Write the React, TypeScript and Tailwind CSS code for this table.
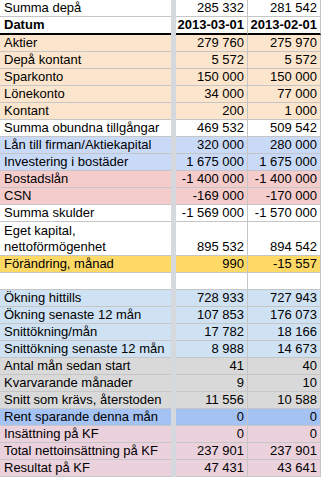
import React from "react";

type Row = {
  a: string;
  b?: string;
  c?: string;
  bg: string;
  bold?: boolean;
  tall?: boolean;
  thick?: boolean;
};

const rows: Row[] = [
  { a: "Summa depå", b: "285 332", c: "281 542", bg: "bg-white" },
  { a: "Datum", b: "2013-03-01", c: "2013-02-01", bg: "bg-white", bold: true, thick: true },
  { a: "Aktier", b: "279 760", c: "275 970", bg: "bg-[#fce5cd]" },
  { a: "Depå kontant", b: "5 572", c: "5 572", bg: "bg-[#fce5cd]" },
  { a: "Sparkonto", b: "150 000", c: "150 000", bg: "bg-[#fce5cd]" },
  { a: "Lönekonto", b: "34 000", c: "77 000", bg: "bg-[#fce5cd]" },
  { a: "Kontant", b: "200", c: "1 000", bg: "bg-[#fce5cd]" },
  { a: "Summa obundna tillgångar", b: "469 532", c: "509 542", bg: "bg-white" },
  { a: "Lån till firman/Aktiekapital", b: "320 000", c: "280 000", bg: "bg-[#c9daf8]" },
  { a: "Investering i bostäder", b: "1 675 000", c: "1 675 000", bg: "bg-[#c9daf8]" },
  { a: "Bostadslån", b: "-1 400 000", c: "-1 400 000", bg: "bg-[#f4cccc]" },
  { a: "CSN", b: "-169 000", c: "-170 000", bg: "bg-[#f4cccc]" },
  { a: "Summa skulder", b: "-1 569 000", c: "-1 570 000", bg: "bg-white" },
  { a: "Eget kapital, nettoförmögenhet", b: "895 532", c: "894 542", bg: "bg-white", tall: true },
  { a: "Förändring, månad", b: "990", c: "-15 557", bg: "bg-[#ffd966]" },
  { a: "", b: "", c: "", bg: "bg-white" },
  { a: "Ökning hittills", b: "728 933", c: "727 943", bg: "bg-[#cfe2f3]" },
  { a: "Ökning senaste 12 mån", b: "107 853", c: "176 073", bg: "bg-[#cfe2f3]" },
  { a: "Snittökning/mån", b: "17 782", c: "18 166", bg: "bg-[#cfe2f3]" },
  { a: "Snittökning senaste 12 mån", b: "8 988", c: "14 673", bg: "bg-[#cfe2f3]" },
  { a: "Antal mån sedan start", b: "41", c: "40", bg: "bg-[#d9d9d9]" },
  { a: "Kvarvarande månader", b: "9", c: "10", bg: "bg-[#d9d9d9]" },
  { a: "Snitt som krävs, återstoden", b: "11 556", c: "10 588", bg: "bg-[#d9d9d9]" },
  { a: "Rent sparande denna mån", b: "0", c: "0", bg: "bg-[#a4c2f4]" },
  { a: "Insättning på KF", b: "0", c: "0", bg: "bg-[#ead1dc]" },
  { a: "Total nettoinsättning på KF", b: "237 901", c: "237 901", bg: "bg-[#ead1dc]" },
  { a: "Resultat på KF", b: "47 431", c: "43 641", bg: "bg-[#ead1dc]" },
];

function SheetRow({ r }: { r: Row }) {
  const h = r.tall ? "h-[34px]" : r.thick ? "h-[18px]" : "h-[17px]";
  const bb = r.thick ? "border-b-2 border-black" : "border-b border-[#c6c6c6]";
  const weight = r.bold ? "font-bold" : "font-normal";
  return (
    <>
      <div
        className={`${h} ${bb} ${r.bg} ${weight} flex items-end overflow-hidden pl-[4px] leading-[16px]`}
      >
        {r.tall ? (
          <div className="whitespace-normal">
            Eget kapital,
            <br />
            nettoförmögenhet
          </div>
        ) : (
          <span className="whitespace-nowrap">{r.a}</span>
        )}
      </div>
      <div className={`${h} bg-[#d5d9de]`} />
      <div
        className={`${h} ${bb} ${r.bg} ${weight} flex items-end justify-end overflow-hidden whitespace-nowrap border-r border-r-[#c6c6c6] pr-[3px] leading-[16px]`}
      >
        {r.b}
      </div>
      <div
        className={`${h} ${bb} ${r.bg} ${weight} flex items-end justify-end overflow-hidden whitespace-nowrap border-r border-r-[#c6c6c6] pr-[3px] leading-[16px]`}
      >
        {r.c}
      </div>
    </>
  );
}

export default function App() {
  return (
    <div
      className="h-[477px] w-[322px] overflow-hidden bg-white text-[13px] text-black"
      style={{ fontFamily: '"Liberation Sans", Arial, sans-serif' }}
    >
      <div className="grid grid-cols-[171px_5px_72px_73px]">
        {rows.map((r, i) => (
          <SheetRow key={i} r={r} />
        ))}
      </div>
    </div>
  );
}
